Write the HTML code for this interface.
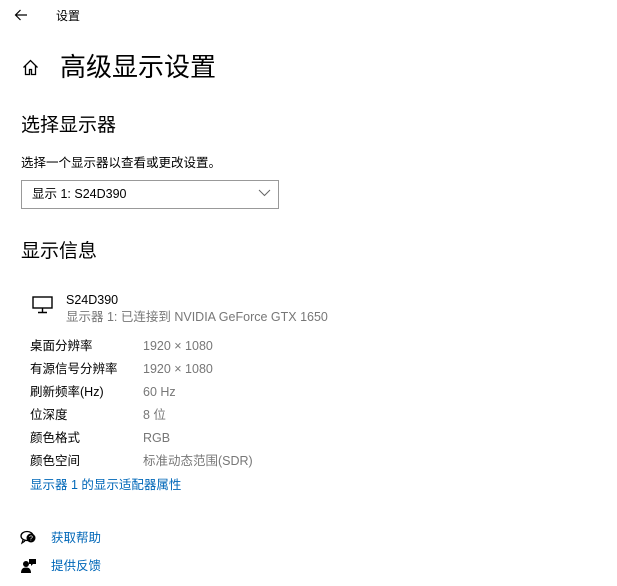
<!DOCTYPE html>
<html><head><meta charset="utf-8"><style>
body{margin:0;width:617px;height:586px;background:#fff;position:relative;overflow:hidden;font-family:"Liberation Sans","Noto Sans CJK SC",sans-serif;color:#000}
.a{position:absolute;white-space:nowrap;line-height:1}
.s{font-size:12.5px}
.g{color:#777}
.l{color:#0067b8}
</style></head><body>
<svg class="a" style="left:14px;top:9px" width="14" height="12" viewBox="0 0 14 12"><path d="M13 6H1.5M6.5 1L1.5 6l5 5" fill="none" stroke="#000" stroke-width="1.2"/></svg>
<div class="a" style="left:56px;top:10px;font-size:12px">设置</div>
<svg class="a" style="left:22px;top:59px" width="17" height="17" viewBox="0 0 17 17"><path d="M1.5 8.5L8.5 1.5l7 7M3.5 6.5V15.5h4v-5h2v5h4V6.5" fill="none" stroke="#000" stroke-width="1.3"/></svg>
<div class="a" style="left:60px;top:54px;font-size:26px">高级显示设置</div>
<div class="a" style="left:21px;top:116px;font-size:19px">选择显示器</div>
<div class="a" style="left:21px;top:157px;font-size:12.5px">选择一个显示器以查看或更改设置。</div>
<div class="a" style="left:21px;top:180px;width:256px;height:27px;border:1.5px solid #999"></div>
<div class="a s" style="left:32px;top:188px">显示 1: S24D390</div>
<svg class="a" style="left:258px;top:189px" width="13" height="8" viewBox="0 0 13 8"><path d="M1 1l5.5 5.5L12 1" fill="none" stroke="#666" stroke-width="1"/></svg>
<div class="a" style="left:21px;top:242px;font-size:19px">显示信息</div>
<svg class="a" style="left:32px;top:296px" width="21" height="18" viewBox="0 0 21 18"><rect x="1" y="1" width="19" height="11" fill="none" stroke="#000" stroke-width="1.4"/><path d="M10.5 12v4M6 16.5h9" stroke="#000" stroke-width="1.4"/></svg>
<div class="a s" style="left:66px;top:294px">S24D390</div>
<div class="a s g" style="left:66px;top:311px">显示器 1: 已连接到 NVIDIA GeForce GTX 1650</div>
<div class="a s" style="left:30px;top:340px">桌面分辨率</div><div class="a s g" style="left:143px;top:340px">1920 × 1080</div>
<div class="a s" style="left:30px;top:363px">有源信号分辨率</div><div class="a s g" style="left:143px;top:363px">1920 × 1080</div>
<div class="a s" style="left:30px;top:386px">刷新频率(Hz)</div><div class="a s g" style="left:143px;top:386px">60 Hz</div>
<div class="a s" style="left:30px;top:409px">位深度</div><div class="a s g" style="left:143px;top:409px">8 位</div>
<div class="a s" style="left:30px;top:432px">颜色格式</div><div class="a s g" style="left:143px;top:432px">RGB</div>
<div class="a s" style="left:30px;top:455px">颜色空间</div><div class="a s g" style="left:143px;top:455px">标准动态范围(SDR)</div>
<div class="a s l" style="left:30px;top:479px">显示器 1 的显示适配器属性</div>
<svg class="a" style="left:20px;top:530px" width="18" height="15" viewBox="0 0 18 15"><ellipse cx="7" cy="6" rx="6" ry="4.5" fill="none" stroke="#000" stroke-width="1.3"/><path d="M3 10l-1 3 3-2" fill="none" stroke="#000" stroke-width="1.2"/><circle cx="11" cy="8" r="4.5" fill="#000"/><text x="11" y="10.5" font-size="7" fill="#fff" text-anchor="middle" font-family="Liberation Sans">?</text></svg>
<div class="a s l" style="left:51px;top:532px">获取帮助</div>
<svg class="a" style="left:21px;top:558px" width="16" height="15" viewBox="0 0 16 15"><circle cx="5" cy="6" r="3" fill="#000"/><path d="M0 15c0-4 2-5.5 5-5.5s5 1.5 5 5.5z" fill="#000"/><path d="M8 1h7v5h-3l-2 2V6H8z" fill="#000"/></svg>
<div class="a s l" style="left:51px;top:560px">提供反馈</div>
</body></html>
